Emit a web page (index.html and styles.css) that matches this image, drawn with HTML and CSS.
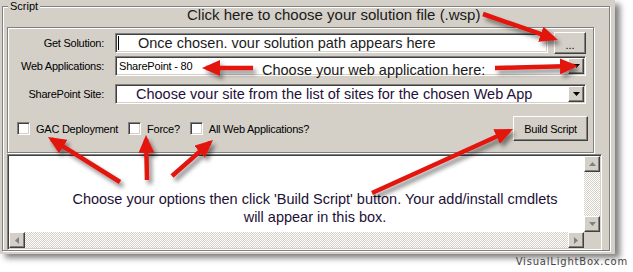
FILE: index.html
```html
<!DOCTYPE html>
<html>
	<head>
		<meta charset="UTF-8">
		<title>Script</title>
		<link rel="stylesheet" href="styles.css">
	</head>
	<body>
		<div id="window">
			<fieldset class="group">
				<legend>Script</legend>
				<div class="panel">
					<div class="formitem">
						<label>Get Solution:</label>
						<div class="pick">
							<div class="field sunken"><span class="caret"></span><span class="big">Once chosen. vour solution path appears here</span></div>
							<button type="button" class="btn browse">...</button>
						</div>
					</div>
					<div class="formitem gap2">
						<label>Web Applications:</label>
						<div class="combo sunken">
							<span class="value">SharePoint - 80</span>
							<span class="drop btn"><svg width="7" height="4" viewBox="0 0 7 4"><polygon points="0,0 7,0 3.5,4" fill="#000"/></svg></span>
						</div>
					</div>
					<div class="formitem gap8">
						<label>SharePoint Site:</label>
						<div class="combo sunken">
							<span class="value big site">Choose vour site from the list of sites for the chosen Web App</span>
							<span class="drop btn"><svg width="7" height="4" viewBox="0 0 7 4"><polygon points="0,0 7,0 3.5,4" fill="#000"/></svg></span>
						</div>
					</div>
					<div class="options">
						<label class="check"><input type="checkbox" class="sunken">GAC Deployment</label>
						<label class="check"><input type="checkbox" class="sunken">Force?</label>
						<label class="check"><input type="checkbox" class="sunken">All Web Applications?</label>
						<button type="button" class="btn build">Build Script</button>
					</div>
				</div>
				<div class="output sunken">
					<div class="text">Choose your options then click 'Build Script' button. Your add/install cmdlets<br>will appear in this box.</div>
					<div class="vbar">
						<span class="sbtn btn"><svg width="7" height="4" viewBox="0 0 7 4"><polygon points="3.5,0 7,4 0,4" fill="#808080"/></svg></span>
						<span class="track"></span>
						<span class="sbtn btn"><svg width="7" height="4" viewBox="0 0 7 4"><polygon points="0,0 7,0 3.5,4" fill="#808080"/></svg></span>
					</div>
					<div class="hbar">
						<span class="sbtn btn"><svg width="4" height="7" viewBox="0 0 4 7"><polygon points="0,3.5 4,0 4,7" fill="#808080"/></svg></span>
						<span class="track"></span>
						<span class="sbtn btn"><svg width="4" height="7" viewBox="0 0 4 7"><polygon points="0,0 4,3.5 0,7" fill="#808080"/></svg></span>
					</div>
					<div class="corner"></div>
				</div>
			</fieldset>
		</div>

		<div class="note note-file">Click here to choose your solution file (.wsp)</div>
		<div class="note note-web">Choose your web application here:</div>

		<svg class="arrows" width="633" height="272" viewBox="0 0 633 272">
			<defs>
				<filter id="shade" filterUnits="userSpaceOnUse" x="0" y="0" width="633" height="272">
					<feDropShadow dx="3" dy="4" stdDeviation="2" flood-color="#000" flood-opacity="0.45"/>
				</filter>
				<marker id="head" markerWidth="18" markerHeight="16" refX="14" refY="8" orient="auto" markerUnits="userSpaceOnUse">
					<path d="M0,0 L18,8 L0,16 z" fill="#e3140e"/>
				</marker>
			</defs>
			<g filter="url(#shade)" stroke="#e3140e" stroke-width="4.5">
				<line x1="483" y1="14" x2="554" y2="38.7" marker-end="url(#head)"/>
				<line x1="253" y1="68" x2="206" y2="68" marker-end="url(#head)"/>
				<line x1="495" y1="68" x2="574" y2="66.1" marker-end="url(#head)"/>
				<line x1="120" y1="182" x2="51.4" y2="139.1" marker-end="url(#head)"/>
				<line x1="147" y1="180" x2="146.1" y2="139" marker-end="url(#head)"/>
				<line x1="172" y1="176" x2="210" y2="142.6" marker-end="url(#head)"/>
				<line x1="372" y1="193" x2="509.4" y2="130.7" marker-end="url(#head)"/>
			</g>
		</svg>

		<div class="brand">VisualLightBox.com</div>
	</body>
</html>
```

FILE: styles.css
```css
* {
	margin: 0;
	padding: 0;
	box-sizing: border-box;
}
body {
	position: relative;
	width: 633px;
	height: 272px;
	overflow: hidden;
	background-color: #fff;
	font-family: "Liberation Sans", Arial, sans-serif;
	font-size: 11px;
	color: #000;
}
#window {
	width: 615px;
	padding: 0 5px 3px 2px;
	background-color: #d4d0c8;
	box-shadow: 5px 4px 6px rgba(0, 0, 0, 0.5);
}
.group {
	min-width: 0;
	width: 608px;
	padding: 0;
	border: 1px solid #808080;
	box-shadow: inset 1px 1px 0 #fff, 1px 1px 0 #fff;
}
.group legend {
	margin-left: 5px;
	padding: 0 2px;
	line-height: 13px;
	background-color: #d4d0c8;
}
.panel {
	width: 587px;
	margin: 14px 0 0 4px;
	padding: 4px 0 11px;
	border: 1px solid #808080;
	box-shadow: inset 1px 1px 0 #fff, 1px 1px 0 #fff;
}
.sunken {
	border: 1px solid;
	border-color: #808080 #fff #fff #808080;
	box-shadow: inset 1px 1px 0 #404040, inset -1px -1px 0 #d4d0c8;
	background-color: #fff;
}
.btn {
	border: 1px solid;
	border-color: #fff #404040 #404040 #fff;
	box-shadow: inset -1px -1px 0 #808080;
	background-color: #d4d0c8;
	font: inherit;
	color: #000;
}
.formitem {
	display: grid;
	grid-template-columns: 96px 471px;
	column-gap: 11px;
	align-items: center;
	height: 22px;
}
.formitem.gap2 {
	height: 20px;
	margin-top: 2px;
}
.formitem.gap8 {
	height: 20px;
	margin-top: 8px;
}
.formitem > label {
	text-align: right;
	letter-spacing: -0.25px;
	white-space: nowrap;
}
.pick {
	display: flex;
	align-items: center;
	gap: 6px;
}
.field {
	display: flex;
	align-items: center;
	width: 433px;
	height: 20px;
	padding: 1px 2px;
}
.caret {
	width: 1px;
	height: 14px;
	background-color: #000;
	margin-right: 19px;
}
.big {
	font-size: 14.5px;
	line-height: 16px;
	color: #1c1c1c;
	white-space: nowrap;
}
.browse {
	width: 32px;
	height: 22px;
	padding-top: 4px;
	line-height: 14px;
}
.combo {
	display: flex;
	align-items: center;
	height: 20px;
	padding: 1px;
}
.combo .value {
	flex: 1;
	padding-left: 2px;
	letter-spacing: -0.2px;
	white-space: nowrap;
	overflow: hidden;
}
.combo .site {
	padding-left: 19px;
	letter-spacing: 0;
	color: #24103a;
}
.drop {
	display: flex;
	align-items: center;
	justify-content: center;
	width: 16px;
	height: 16px;
}
.options {
	display: flex;
	align-items: center;
	height: 25px;
	margin-top: 12px;
	padding-left: 9px;
}
.check {
	display: flex;
	align-items: center;
	margin-right: 10px;
	letter-spacing: -0.25px;
	white-space: nowrap;
}
.check input {
	appearance: none;
	width: 13px;
	height: 13px;
	margin-right: 6px;
}
.build {
	width: 75px;
	height: 25px;
	margin-left: auto;
	margin-right: 5px;
	letter-spacing: -0.25px;
}
.output {
	display: grid;
	grid-template-columns: 1fr 16px;
	grid-template-rows: 1fr 16px;
	width: 595px;
	height: 96px;
	margin: 1px 0 0 4px;
	padding: 1px;
}
.output .text {
	padding: 34px 0 0 37px;
	text-align: center;
	font-size: 14.5px;
	line-height: 18px;
	color: #1e1036;
	white-space: nowrap;
}
.vbar {
	display: flex;
	flex-direction: column;
}
.hbar {
	display: flex;
}
.sbtn {
	display: flex;
	align-items: center;
	justify-content: center;
	flex: 0 0 16px;
	width: 16px;
	height: 16px;
}
.track {
	flex: 1;
	background: repeating-conic-gradient(#fff 0 25%, #d4d0c8 0 50%) 0 0 / 2px 2px;
}
.corner {
	background-color: #d4d0c8;
}
.note {
	position: absolute;
	font-size: 14.5px;
	line-height: 17px;
	color: #1a1a1a;
	white-space: nowrap;
}
.note-file {
	left: 187px;
	top: 6px;
	font-size: 15px;
}
.note-web {
	left: 262px;
	top: 62px;
}
.arrows {
	position: absolute;
	left: 0;
	top: 0;
}
.brand {
	position: absolute;
	right: 5px;
	top: 256px;
	font-family: "DejaVu Sans", sans-serif;
	font-size: 10px;
	letter-spacing: 0.8px;
	color: #444;
}
```
